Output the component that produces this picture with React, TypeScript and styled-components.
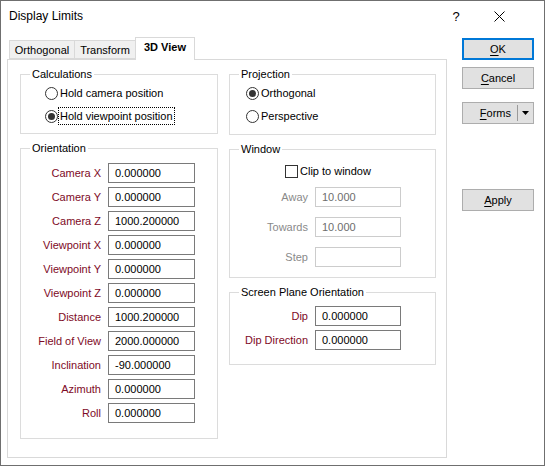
import React from 'react';
import styled, { createGlobalStyle } from 'styled-components';

const Global = createGlobalStyle`
  html, body { margin: 0; padding: 0; background: #fff; }
  body {
    font-family: "Liberation Sans", Arial, sans-serif;
    font-size: 11px;
    color: #000;
  }
  * { box-sizing: border-box; }
`;

const Dialog = styled.div`
  width: 545px;
  height: 466px;
  border: 1px solid #6f6f6f;
  background: #fff;
  display: flex;
  flex-direction: column;
`;

const TitleBar = styled.div`
  height: 30px;
  display: flex;
  align-items: center;
  padding-left: 8px;
  padding-right: 35px;
`;

const Title = styled.div`
  flex: 1;
  font-size: 12px;
`;

const TitleBtn = styled.div<{ $gap?: number }>`
  width: 20px;
  height: 20px;
  display: flex;
  align-items: center;
  justify-content: center;
  font-size: 13px;
  margin-left: ${(p) => p.$gap ?? 0}px;
`;

const Body = styled.div`
  display: flex;
  padding-left: 6px;
  padding-top: 6px;
  gap: 15px;
`;

const TabArea = styled.div`
  display: flex;
  flex-direction: column;
`;

const TabStrip = styled.div`
  display: flex;
  align-items: flex-end;
  height: 22px;
  padding-left: 2px;
  position: relative;
  z-index: 1;
`;

const Tab = styled.div<{ $active?: boolean; $w: number }>`
  width: ${(p) => p.$w}px;
  height: ${(p) => (p.$active ? 23 : 19)}px;
  margin-bottom: ${(p) => (p.$active ? -1 : 0)}px;
  margin-left: -1px;
  border: 1px solid #d9d9d9;
  border-bottom: ${(p) => (p.$active ? 'none' : '1px solid #d9d9d9')};
  background: ${(p) => (p.$active ? '#fff' : '#f0f0f0')};
  font-weight: ${(p) => (p.$active ? 700 : 400)};
  display: flex;
  justify-content: center;
  align-items: ${(p) => (p.$active ? 'flex-start' : 'center')};
  padding-top: ${(p) => (p.$active ? 3 : 0)}px;
  &:first-child { margin-left: 0; }
`;

const Panel = styled.div`
  width: 440px;
  height: 399px;
  border: 1px solid #d9d9d9;
  padding: 6px 0 0 12px;
  display: grid;
  grid-template-columns: 198px 207px;
  column-gap: 11px;
  align-items: start;
`;

const Column = styled.div<{ $gap: number }>`
  display: flex;
  flex-direction: column;
  gap: ${(p) => p.$gap}px;
`;

const Group = styled.fieldset<{ $h: number }>`
  margin: 0;
  height: ${(p) => p.$h}px;
  border: 1px solid #dcdcdc;
  padding: 0;
  min-width: 0;
`;

const Legend = styled.legend`
  margin-left: 9px;
  padding: 0 2px;
  line-height: 16px;
  height: 16px;
  color: #000;
`;

const RadioList = styled.div<{ $mt: number; $pl: number }>`
  display: flex;
  flex-direction: column;
  gap: 3px;
  margin-top: ${(p) => p.$mt}px;
  padding-left: ${(p) => p.$pl}px;
`;

const ChoiceRow = styled.div`
  display: flex;
  align-items: center;
  height: 20px;
`;

const RadioCircle = styled.span<{ $on?: boolean }>`
  width: 13px;
  height: 13px;
  border-radius: 50%;
  border: 1px solid #333;
  background: #fff;
  display: flex;
  align-items: center;
  justify-content: center;
  &::after {
    content: '';
    width: 7px;
    height: 7px;
    border-radius: 50%;
    background: ${(p) => (p.$on ? '#333' : 'transparent')};
  }
`;

const CheckBox = styled.span`
  width: 13px;
  height: 13px;
  border: 1px solid #333;
  background: #fff;
`;

const ChoiceLabel = styled.span<{ $focus?: boolean }>`
  margin-left: 1px;
  padding: 0 1px;
  line-height: 16px;
  outline: ${(p) => (p.$focus ? '1px dotted #000' : 'none')};
  outline-offset: 0;
`;

const Fields = styled.div<{ $mt: number; $gap: number }>`
  display: flex;
  flex-direction: column;
  gap: ${(p) => p.$gap}px;
  margin-top: ${(p) => p.$mt}px;
`;

const FieldRow = styled.div`
  display: flex;
  align-items: center;
  gap: 7px;
`;

const FieldLabel = styled.span<{ $w: number; $disabled?: boolean }>`
  width: ${(p) => p.$w}px;
  text-align: right;
  white-space: nowrap;
  color: ${(p) => (p.$disabled ? '#8a8a8a' : '#7e0a26')};
`;

const Input = styled.div<{ $w: number; $disabled?: boolean }>`
  width: ${(p) => p.$w}px;
  height: 20px;
  border: 1px solid ${(p) => (p.$disabled ? '#cccccc' : '#7a7a7a')};
  padding-left: 6px;
  display: flex;
  align-items: center;
  color: ${(p) => (p.$disabled ? '#6d6d6d' : '#000')};
  background: #fff;
`;

const CheckRow = styled.div`
  display: flex;
  align-items: center;
  height: 20px;
  margin-top: 4px;
  padding-left: 55px;
`;

const ButtonCol = styled.div`
  display: flex;
  flex-direction: column;
  width: 72px;
  padding-top: 1px;
`;

const Button = styled.div<{ $default?: boolean; $mt?: number }>`
  height: 22px;
  margin-top: ${(p) => p.$mt ?? 0}px;
  background: #e1e1e1;
  border: ${(p) => (p.$default ? '2px solid #0078d7' : '1px solid #adadad')};
  display: flex;
  align-items: center;
  justify-content: center;
  u { text-decoration: underline; text-underline-offset: 2px; }
`;

const SplitButton = styled(Button)`
  justify-content: flex-start;
`;

const SplitMain = styled.span`
  flex: 1;
  text-align: right;
  padding-right: 6px;
`;

const SplitDivider = styled.span`
  width: 1px;
  height: 16px;
  background: #9a9a9a;
`;

const SplitArrow = styled.span`
  width: 15px;
  display: flex;
  align-items: center;
  justify-content: center;
`;

const orientation: [string, string][] = [
  ['Camera X', '0.000000'],
  ['Camera Y', '0.000000'],
  ['Camera Z', '1000.200000'],
  ['Viewpoint X', '0.000000'],
  ['Viewpoint Y', '0.000000'],
  ['Viewpoint Z', '0.000000'],
  ['Distance', '1000.200000'],
  ['Field of View', '2000.000000'],
  ['Inclination', '-90.000000'],
  ['Azimuth', '0.000000'],
  ['Roll', '0.000000'],
];

export default function App() {
  return (
    <>
      <Global />
      <Dialog>
        <TitleBar>
          <Title>Display Limits</Title>
          <TitleBtn>?</TitleBtn>
          <TitleBtn $gap={23}>
            <svg width="11" height="11" viewBox="0 0 11 11">
              <path d="M0.5 0.5 L10.5 10.5 M10.5 0.5 L0.5 10.5" stroke="#000" strokeWidth="1" />
            </svg>
          </TitleBtn>
        </TitleBar>
        <Body>
          <TabArea>
            <TabStrip>
              <Tab $w={66}>Orthogonal</Tab>
              <Tab $w={62}>Transform</Tab>
              <Tab $w={60} $active>3D View</Tab>
            </TabStrip>
            <Panel>
              <Column $gap={6}>
                <Group $h={68}>
                  <Legend>Calculations</Legend>
                  <RadioList $mt={1} $pl={24}>
                    <ChoiceRow>
                      <RadioCircle />
                      <ChoiceLabel>Hold camera position</ChoiceLabel>
                    </ChoiceRow>
                    <ChoiceRow>
                      <RadioCircle $on />
                      <ChoiceLabel $focus>Hold viewpoint position</ChoiceLabel>
                    </ChoiceRow>
                  </RadioList>
                </Group>
                <Group $h={299}>
                  <Legend>Orientation</Legend>
                  <Fields $mt={7} $gap={4}>
                    {orientation.map(([l, v]) => (
                      <FieldRow key={l}>
                        <FieldLabel $w={80}>{l}</FieldLabel>
                        <Input $w={87}>{v}</Input>
                      </FieldRow>
                    ))}
                  </Fields>
                </Group>
              </Column>
              <Column $gap={6}>
                <Group $h={69}>
                  <Legend>Projection</Legend>
                  <RadioList $mt={1} $pl={16}>
                    <ChoiceRow>
                      <RadioCircle $on />
                      <ChoiceLabel>Orthogonal</ChoiceLabel>
                    </ChoiceRow>
                    <ChoiceRow>
                      <RadioCircle />
                      <ChoiceLabel>Perspective</ChoiceLabel>
                    </ChoiceRow>
                  </RadioList>
                </Group>
                <Group $h={137}>
                  <Legend>Window</Legend>
                  <CheckRow>
                    <CheckBox />
                    <ChoiceLabel>Clip to window</ChoiceLabel>
                  </CheckRow>
                  <Fields $mt={6} $gap={10}>
                    <FieldRow>
                      <FieldLabel $w={78} $disabled>Away</FieldLabel>
                      <Input $w={86} $disabled>10.000</Input>
                    </FieldRow>
                    <FieldRow>
                      <FieldLabel $w={78} $disabled>Towards</FieldLabel>
                      <Input $w={86} $disabled>10.000</Input>
                    </FieldRow>
                    <FieldRow>
                      <FieldLabel $w={78} $disabled>Step</FieldLabel>
                      <Input $w={86} $disabled />
                    </FieldRow>
                  </Fields>
                </Group>
                <Group $h={81}>
                  <Legend>Screen Plane Orientation</Legend>
                  <Fields $mt={6} $gap={4}>
                    <FieldRow>
                      <FieldLabel $w={78}>Dip</FieldLabel>
                      <Input $w={86}>0.000000</Input>
                    </FieldRow>
                    <FieldRow>
                      <FieldLabel $w={78}>Dip Direction</FieldLabel>
                      <Input $w={86}>0.000000</Input>
                    </FieldRow>
                  </Fields>
                </Group>
              </Column>
            </Panel>
          </TabArea>
          <ButtonCol>
            <Button $default><span><u>O</u>K</span></Button>
            <Button $mt={7}><span><u>C</u>ancel</span></Button>
            <SplitButton $mt={13}>
              <SplitMain><u>F</u>orms</SplitMain>
              <SplitDivider />
              <SplitArrow>
                <svg width="7" height="4" viewBox="0 0 7 4">
                  <path d="M0 0 H7 L3.5 4 Z" fill="#000" />
                </svg>
              </SplitArrow>
            </SplitButton>
            <Button $mt={65}><span><u>A</u>pply</span></Button>
          </ButtonCol>
        </Body>
      </Dialog>
    </>
  );
}
